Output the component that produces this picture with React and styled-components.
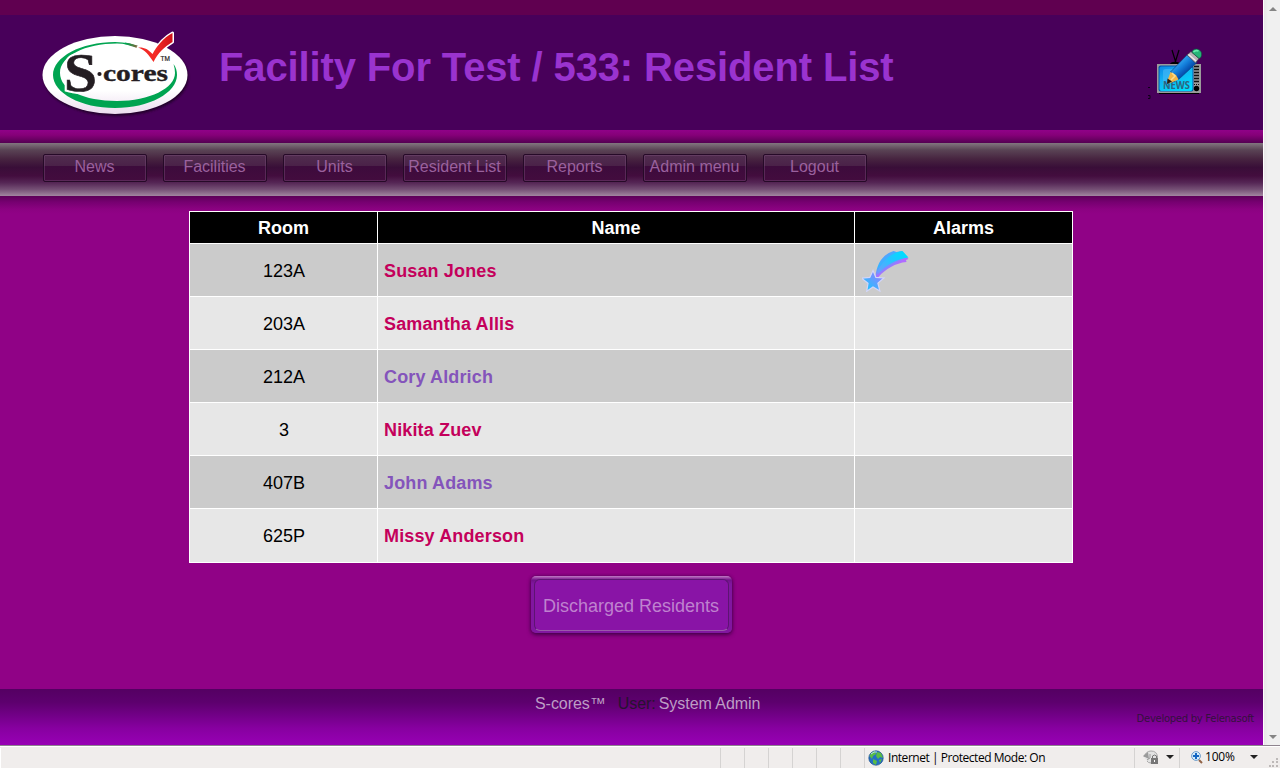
import React from 'react';
import styled, { createGlobalStyle } from 'styled-components';

const Global = createGlobalStyle`
  * { box-sizing: border-box; }
  body { margin: 0; overflow: hidden; font-family: "Liberation Sans", Arial, sans-serif; }
`;
const Window = styled.div`
  width: 1280px; height: 768px; display: flex; flex-direction: column; background: #f0edec;
`;
const Viewport = styled.div`display: flex; height: 745px;`;
const Page = styled.div`
  width: 1263px; display: flex; flex-direction: column; background: #900286;
`;
const TopStripe = styled.div`height: 15px; flex: none; background: #600050;`;
const Header = styled.header`
  height: 115px; flex: none; display: flex; align-items: flex-start; background: #48005a;
`;
const Logo = styled.svg`width: 170px; height: 110px; margin: 5px 0 0 30px; flex: none;`;
const Title = styled.h1`
  margin: 29px 0 0 19px; width: 911px; color: #9a33cf; font-size: 40px; line-height: 46px;
  font-weight: bold; white-space: nowrap; letter-spacing: ${p => p.$spacing};
`;
const NewsIcon = styled.svg`width: 60px; height: 60px; margin: 30px 0 0 15px; flex: none;`;
const NavShadow = styled.div`
  height: 13px; flex: none; background: linear-gradient(#900288 0%, #850078 40%, #540052 100%);
`;
const Nav = styled.nav`
  height: 53px; flex: none; display: flex; gap: 16px; padding: 11px 43px 0;
  background: linear-gradient(#82767f 0%, #5a4455 13%, #472440 30%, #390e38 46%, #430d3e 62%, #552655 75%, #765176 88%, #a286a0 100%);
`;
const NavButton = styled.a`
  width: 104px; height: 28px; border: 1px solid #260a28; border-radius: 2px;
  box-shadow: inset 0 0 0 1px rgba(125, 80, 125, .42);
  background: linear-gradient(#512d4f 0%, #4a2148 43%, #3d0b3c 44%, #430c3e 100%);
  color: #9a619d; font-size: 16px; line-height: 24px; text-align: center; white-space: nowrap;
  padding-right: 1px;
`;
const Content = styled.main`
  height: 493px; flex: none; display: flex; flex-direction: column; align-items: center;
  padding: 15px 1px 0 0; background: linear-gradient(#5d0058 0, #760070 6px, #8b0281 13px, #900286 18px);
`;
const Table = styled.div`
  width: 884px; height: 352px; flex: none; display: grid; gap: 1px; padding: 1px; background: #fff;
  grid-template-columns: 187px 476px 217px; grid-template-rows: 31px repeat(5, 52px) 53px;
`;
const HeadCell = styled.div`
  background: #000; color: #fff; font-size: 18px; font-weight: bold; line-height: 32px; text-align: center;
  height: 31px; overflow: hidden;
`;
const Cell = styled.div`
  background: ${p => (p.$odd ? '#e7e7e7' : '#cbcbcb')}; font-size: 18px; line-height: 54px;
  color: #000; text-align: center; overflow: hidden; padding-left: 1px;
`;
const NameCell = styled(Cell)`
  text-align: left; padding-left: 6px; font-weight: bold; letter-spacing: 0.14px;
  color: ${p => (p.$visited ? '#8454bb' : '#c4005b')};
`;
const AlarmCell = styled(Cell)`display: flex; padding: 5px 7px;`;
const BigButton = styled.button`
  width: 201px; height: 57px; margin: 13px 0 0 0; padding: 3px; flex: none; border: 0; border-radius: 5px;
  background: linear-gradient(#c07bc5 0, #9a42a5 2px, #72118a 4px, #8116a0 8px, #8116a0 100%);
  box-shadow: 0 2px 4px rgba(40, 0, 50, .65), 0 0 3px rgba(50, 0, 60, .5);
`;
const ButtonFace = styled.span`
  display: block; width: 195px; height: 52px; border: 1px solid #5d1472; border-bottom-color: #9a5aa8;
  border-radius: 6px; background: #8914a6;
  color: #bf82cf; font: 18px/53px "Liberation Sans", Arial, sans-serif; white-space: nowrap;
`;
const Footer = styled.footer`
  height: 56px; flex: none; background: linear-gradient(#540062 0%, #5d006e 24%, #8700a0 70%, #9800b5 100%);
  font-size: 16px; color: #bd9cc5;
`;
const UserLine = styled.div`
  padding: 5px 0 0 535px; display: flex; line-height: 20px; white-space: pre; letter-spacing: -0.05px;
`;
const UserLabel = styled.span`color: #271330; margin: 0 3px 0 12px;`;
const Credit = styled.div`
  text-align: right; padding-right: 9px; color: #34113d; font: 10px/10px "DejaVu Sans", sans-serif;
  letter-spacing: ${p => p.$spacing};
`;
const Scrollbar = styled.div`
  width: 17px; border-left: 1px solid #fff; background: linear-gradient(90deg, #e7e7e7, #f0f0f0 4px);
  display: flex; flex-direction: column; justify-content: space-between; align-items: center; padding: 7px 0 6px 1px;
`;
const StatusBar = styled.div`
  height: 23px; border-top: 1px solid #8e848e; display: flex; background: #f0edec; box-shadow: inset 0 1px #fff;
  padding-top: 2px; font: 12px/20px "Open Sans", "Noto Sans", sans-serif; color: #000;
`;
const Blank = styled.div`width: ${p => p.$w}px; border-right: 1px solid #d5d3d2; border-left: ${p => (p.$first ? '1px solid #fff' : 0)};`;
const Zone = styled.div`
  width: 270px; display: flex; align-items: center; gap: 4px; padding-left: 3px; border-right: 1px solid #d5d3d2; white-space: nowrap;
  letter-spacing: -0.46px;
`;
const Tools = styled.div`
  width: ${p => p.$w}px; padding-left: ${p => p.$pad}px; display: flex; align-items: center; gap: ${p => p.$gap}px;
  border-right: ${p => (p.$rule ? '1px solid #d5d3d2' : 0)}; letter-spacing: -0.2px; padding-bottom: 2px;
`;
const Grip = styled.svg`align-self: flex-end; margin: 0 0 1px 10px; flex: none;`;

const people = [
  ['123A', 'Susan Jones', false, true],
  ['203A', 'Samantha Allis', false],
  ['212A', 'Cory Aldrich', true],
  ['3', 'Nikita Zuev', false],
  ['407B', 'John Adams', true],
  ['625P', 'Missy Anderson', false],
];

const LogoMark = () => (
  <Logo viewBox="0 0 170 110">
    <defs>
      <linearGradient id="tick" x1="0" x2="1"><stop offset="0" stopColor="#f02626" /><stop offset=".5" stopColor="#f42c26" /><stop offset="1" stopColor="#cf1018" /></linearGradient>
      <linearGradient id="ring" gradientUnits="userSpaceOnUse" x1="96" x2="114" y1="0" y2="0"><stop offset="0" stopColor="#00a451" /><stop offset="1" stopColor="#d3382b" /></linearGradient>
      <linearGradient id="plate" x1="0" y1="0" x2="0" y2="1"><stop offset=".7" stopColor="#fff" /><stop offset="1" stopColor="#ecdcef" /></linearGradient>
      <filter id="soft"><feGaussianBlur stdDeviation="1.2" /></filter>
    </defs>
    <ellipse cx="86" cy="57" rx="72.5" ry="39" fill="#210029" filter="url(#soft)" />
    <ellipse cx="85" cy="55" rx="72.5" ry="39" fill="url(#plate)" />
    <path d="M143.500 44C146 47 147 51 147 55C147 73 119 88 85 88S23 73 23 55S51 22 85 22C95 22 104 24 113 28L107 27.500C100 25 94 23.500 87 23.500C55 23.500 30 36 30 53S54 81 87 81S145 68 145 53C145 50 144.500 47 143.500 44Z" fill="#00a451" />
    <path d="M95 22.600C102 23.500 109 26 115 29L107 28C102 26 98 25 94 24Z" fill="url(#ring)" />
    <path d="M108 27.500C114 27 118 29 122.500 34C127 26 133 18 142.500 13L142.500 22C134 27 128 33 123.500 42C119 35 115 30 108 27.500Z" fill="#fff" stroke="#fff" strokeWidth="3" strokeLinejoin="round" />
    <path d="M108 27.500C114 27 118 29 122.500 34C127 26 133 18 142.500 13L142.500 22C134 27 128 33 123.500 42C119 35 115 30 108 27.500Z" fill="url(#tick)" />
    <text x="34" y="70.500" fontFamily="Liberation Serif, serif" fontSize="55" fill="#fff" stroke="#fff" strokeWidth="4.5" fontWeight="bold" textLength="33" lengthAdjust="spacingAndGlyphs">S</text>
    <text x="34" y="70.500" fontFamily="Liberation Serif, serif" fontSize="55" fontWeight="bold" fill="#241d22" stroke="#241d22" strokeWidth=".6" textLength="33" lengthAdjust="spacingAndGlyphs">S</text>
    <circle cx="69.500" cy="54" r="2.1" fill="#241d22" />
    <text x="73" y="60.500" fontFamily="Liberation Serif, serif" fontSize="24" fontWeight="bold" fill="#241d22" stroke="#241d22" strokeWidth=".35" textLength="65" lengthAdjust="spacingAndGlyphs">cores</text>
    <text x="130.500" y="41" fontFamily="Liberation Sans, sans-serif" fontSize="6.5" fill="#241d22" stroke="#241d22" strokeWidth=".2" textLength="9.500">TM</text>
  </Logo>
);

const News = () => (
  <NewsIcon viewBox="1145 45 60 60">
    <defs>
      <linearGradient id="screen" x1="0" y1="0" x2=".7" y2="1"><stop stopColor="#0b86e6" /><stop offset=".4" stopColor="#14b0f2" /><stop offset="1" stopColor="#00dcfb" /></linearGradient>
      <linearGradient id="body" gradientUnits="userSpaceOnUse" x1="1178" y1="61" x2="1188" y2="72"><stop offset="0" stopColor="#3aaaf0" /><stop offset=".45" stopColor="#1480dc" /><stop offset=".9" stopColor="#064eae" /></linearGradient>
    </defs>
    <path d="M1172 50l4 13M1179 50l-4 13" stroke="#000" strokeWidth="1.2" />
    <path d="M1170 64c1-3 9-3 10 0z" fill="#000" />
    <path d="M1159 93h40" stroke="#000" strokeWidth="2" />
    <rect x="1157" y="64" width="44" height="29" fill="#9b9b9b" />
    <rect x="1158.500" y="65.500" width="35" height="26" rx="2" fill="#045aa9" />
    <rect x="1159.500" y="66.500" width="33" height="24.500" rx="2" fill="url(#screen)" />
    <path d="M1163 86V71q0-2 3-2h17q-12 3-20 17" fill="#4ab9f6" opacity=".6" />
    <path d="M1194 66.500h5M1194 69.500h5M1194 72.500h5M1194 75.500h5M1194 78.500h5M1194 81.500h5" stroke="#111" strokeWidth="1.4" />
    <path d="M1194 84.500h5" stroke="#111" strokeDasharray="1 1" />
    <circle cx="1196.500" cy="88.500" r="2.7" fill="#000" />
    <text x="1163" y="89" fontFamily="Open Sans, sans-serif" fontSize="10" fontWeight="bold" fill="#2c6480" textLength="27" lengthAdjust="spacingAndGlyphs">NEWS</text>
    <path d="M1170.500 72L1188 54L1197 62.500L1178.500 79.500Z" fill="url(#body)" stroke="#064586" strokeWidth=".7" />
    <path d="M1170.500 72L1167 82L1169 83.500L1178.500 79.500L1176 75Z" fill="#f2b546" />
    <path d="M1172 73l3 3-4 4" stroke="#fbdc8b" strokeWidth="1.5" fill="none" />
    <path d="M1167.500 78.500L1167 84L1172 81.500Z" fill="#241e18" />
    <path d="M1187 55L1191 51.500L1199 58.500L1195.500 63Z" fill="#b9b3b7" stroke="#3c3540" strokeWidth=".6" />
    <path d="M1188.500 54.500l7.500 6.500" stroke="#f0edef" strokeWidth="1.3" />
    <path d="M1192 52.500C1192 48 1200 47.500 1201.500 53C1202 57 1200 59 1198.500 58Z" fill="#24b477" stroke="#11513e" strokeWidth=".6" />
    <path d="M1193.500 52q2-2 5-1" stroke="#66edaf" strokeWidth="1.6" fill="none" />
    <path d="M1148 87.500h2M1148 95.500h2v3h-2" stroke="#10001a" fill="none" />
  </NewsIcon>
);

const Star = () => (
  <svg width="49" height="43" viewBox="862.5 249 49 43">
    <defs>
      <linearGradient id="tail" gradientUnits="userSpaceOnUse" x1="885" y1="253" x2="896" y2="270"><stop offset="0" stopColor="#619cff" /><stop offset=".4" stopColor="#35b5ff" /><stop offset=".8" stopColor="#b06cff" /></linearGradient>
      <linearGradient id="front" gradientUnits="userSpaceOnUse" x1="879" y1="273" x2="903" y2="252"><stop offset="0" stopColor="#6d9cff" /><stop offset=".6" stopColor="#1fc8ff" /><stop offset="1" stopColor="#00dcff" /></linearGradient>
      <linearGradient id="star" x1="0" y1="1" x2="1" y2="0"><stop offset=".1" stopColor="#13cbff" /><stop offset="1" stopColor="#ad70ff" /></linearGradient>
    </defs>
    <path d="M876 277C877 263 884 254 894 251L897 252L902 251L909 259L906.500 260L907 262C896 263 886 269 879 277Z" fill="url(#tail)" />
    <path d="M878 272C883 260 892 254 899 252L903 251L909 257.500C897 259 886 265 878.500 274Z" fill="url(#front)" />
    <path d="M873.500 270.500l2.900 6.900 8 .5-6 5.200 2 8-6.900-4.200-6.300 4.400 1.300-8-6.500-5.200 8.300-.7z" fill="url(#star)" stroke="#d3d6f8" strokeWidth="1.200" />
  </svg>
);

const Arrow = ({ up }) => (
  <svg width="8" height="4" viewBox="0 0 8 4"><path d={up ? 'M0 4L4 0L8 4Z' : 'M0 0H8L4 4Z'} fill="#858585" /></svg>
);
const Drop = () => <svg width="8" height="4" viewBox="0 0 8 4"><path d="M0 0h8L4 4z" fill="#222" /></svg>;

export default function App() {
  return (
    <Window>
      <Global />
      <Viewport>
        <Page>
          <TopStripe />
          <Header><LogoMark /><Title $spacing="-0.13px">Facility For Test / 533: Resident List</Title><News /></Header>
          <NavShadow />
          <Nav>{['News', 'Facilities', 'Units', 'Resident List', 'Reports', 'Admin menu', 'Logout'].map(t => <NavButton key={t}>{t}</NavButton>)}</Nav>
          <Content>
            <Table>
              <HeadCell>Room</HeadCell><HeadCell>Name</HeadCell><HeadCell>Alarms</HeadCell>
              {people.map(([room, name, visited, alarm], i) => (
                <React.Fragment key={room}>
                  <Cell $odd={i % 2 === 1}>{room}</Cell>
                  <NameCell $odd={i % 2 === 1} $visited={visited}>{name}</NameCell>
                  <AlarmCell $odd={i % 2 === 1}>{alarm && <Star />}</AlarmCell>
                </React.Fragment>
              ))}
            </Table>
            <BigButton><ButtonFace>Discharged Residents</ButtonFace></BigButton>
          </Content>
          <Footer>
            <UserLine><span>S-cores™</span><UserLabel>User:</UserLabel><span>System Admin</span></UserLine>
            <Credit $spacing="-0.27px">Developed by Felenasoft</Credit>
          </Footer>
        </Page>
        <Scrollbar><Arrow up /><Arrow /></Scrollbar>
      </Viewport>
      <StatusBar>
        <Blank $first $w={721} /><Blank $w={24} /><Blank $w={24} /><Blank $w={24} /><Blank $w={24} /><Blank $w={24} /><Blank $w={24} />
        <Zone>
          <svg width="16" height="16" viewBox="0 0 16 16">
            <circle cx="8" cy="8" r="7.2" fill="#246fc4" stroke="#164b8a" strokeWidth=".7" />
            <path d="M1.500 6Q3 2 7 1l1 3-3 2-1 3zM9 2l4 1 2 5-3-1-2 2-2-3zM5 9l4 2-1 4-3-2zM11 10l3-1-2 4z" fill="#59bc45" />
            <path d="M3 4q3-3 6-2" stroke="#b9e4f5" fill="none" />
          </svg>
          <span>Internet | Protected Mode: On</span>
        </Zone>
        <Tools $w={45} $pad={8} $gap={7} $rule>
          <svg width="16" height="15" viewBox="0 0 16 15">
            <path d="M1 7Q3 1 8 1Q14 1 14.500 7Q14 13 8 13Q5 13 4 11" fill="#e2e2e2" stroke="#a8a8a8" />
            <path d="M0 6l5-4 1 7z" fill="#9a9a9a" /><path d="M7 4v4l-3 2" stroke="#999" fill="none" />
            <rect x="8" y="8" width="7" height="6" fill="#777" /><path d="M9.500 8V6q2-2 4 0v2" fill="none" stroke="#777" /><path d="M11.500 10v2" stroke="#fff" />
          </svg><Drop />
        </Tools>
        <Tools $w={78} $pad={11} $gap={2}>
          <svg width="12" height="13" viewBox="0 0 12 13"><path d="M8 9l3 3" stroke="#916246" strokeWidth="2" /><circle cx="5" cy="5" r="4.400" fill="#d6ecfb" stroke="#6e9dca" /><path d="M5 2v6M2 5h6" stroke="#1567c2" strokeWidth="2" /></svg>
          <span>100%</span><svg width="11" height="1" /><Drop />
        </Tools>
        <Grip width="10" height="10" viewBox="0 0 10 10"><path d="M8 1h2v2H8zM4 4h2v2H4zM8 4h2v2H8zM1 8h2v2H1zM4 8h2v2H4zM8 8h2v2H8z" fill="#bdb9b8" /></Grip>
      </StatusBar>
    </Window>
  );
}
